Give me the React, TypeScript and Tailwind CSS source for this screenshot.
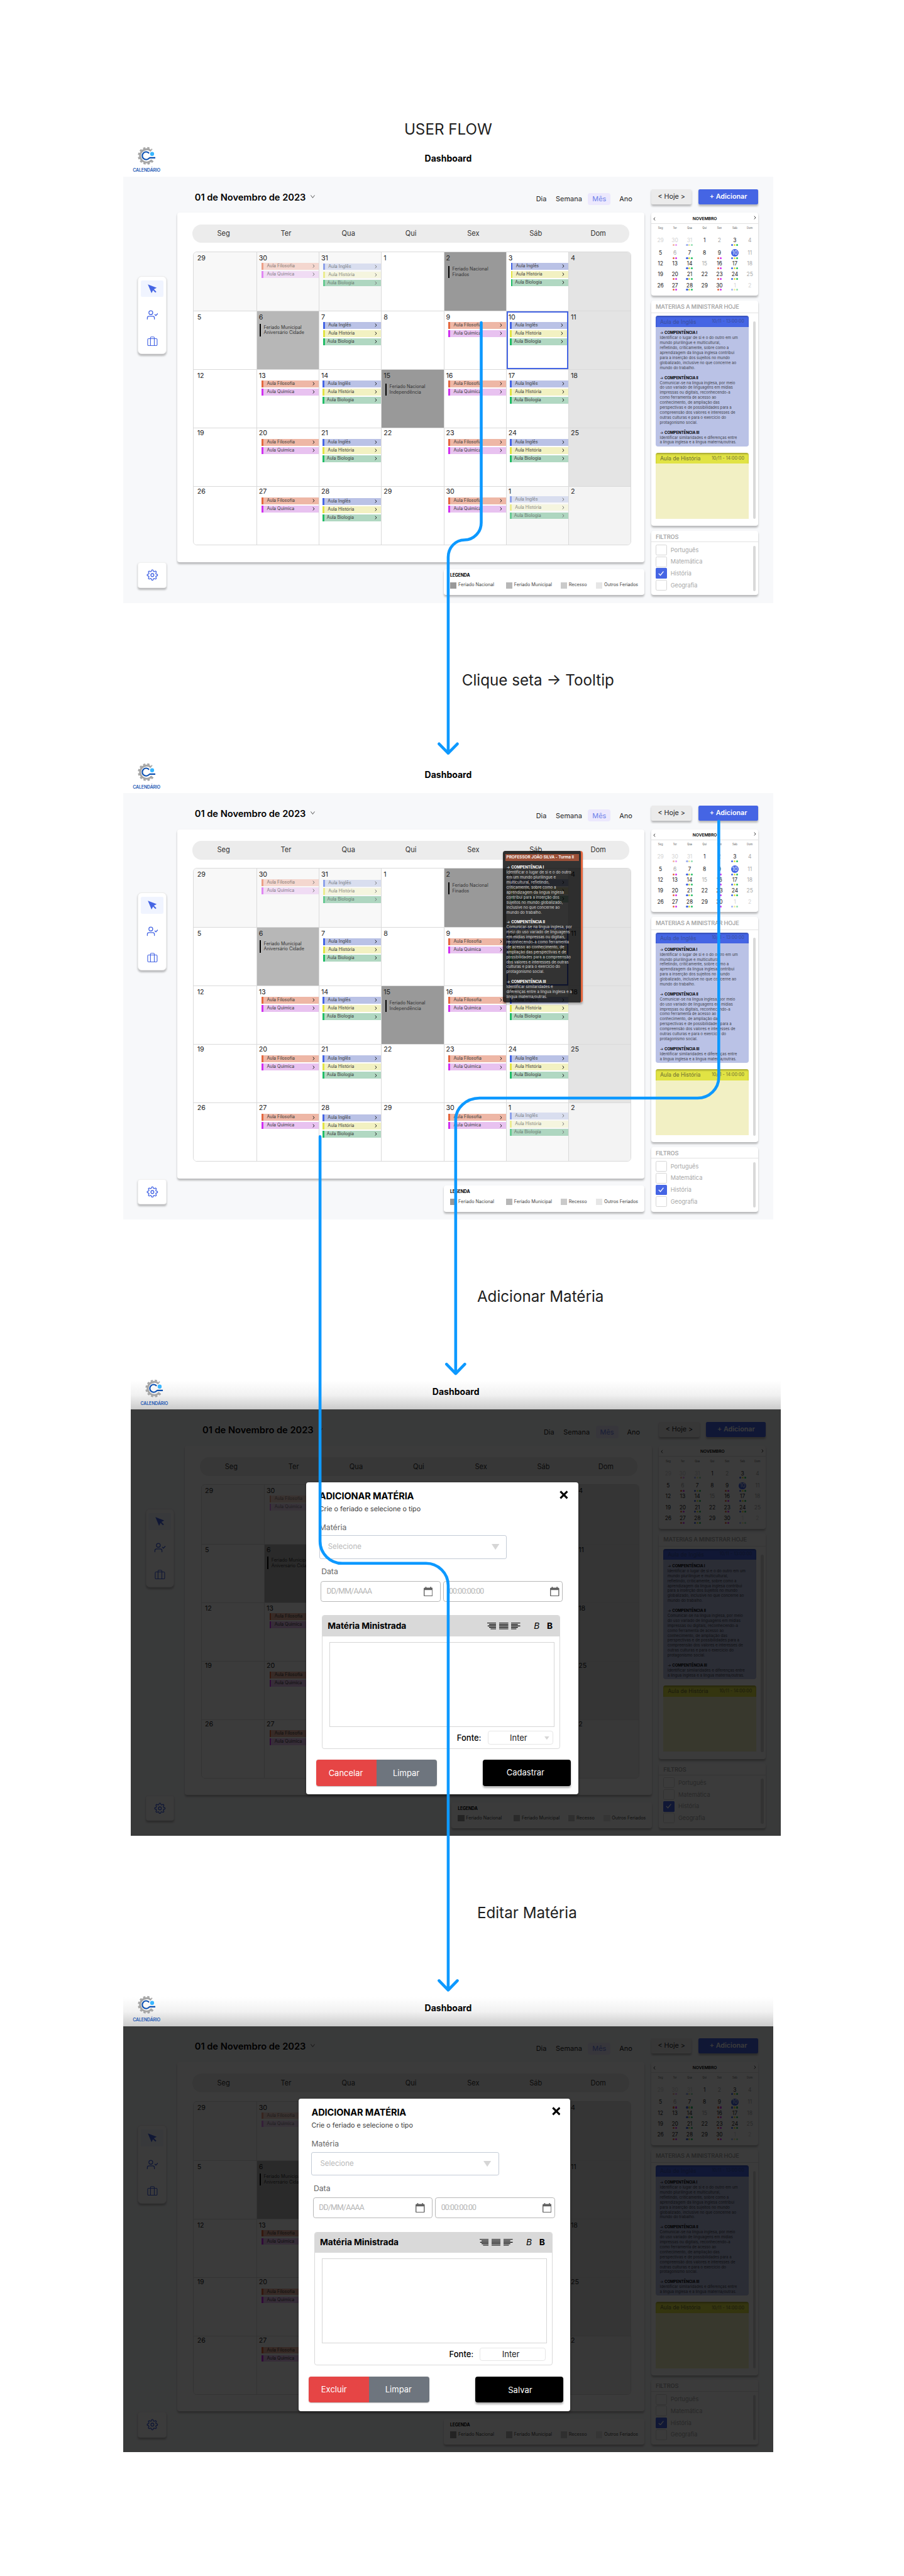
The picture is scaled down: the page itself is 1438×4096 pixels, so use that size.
import type { ReactNode } from "react";

type Kind = "fil" | "qui" | "ing" | "his" | "bio";

const KIND: Record<Kind, { label: string; bar: string; bg: string; soft: string; pad: string }> = {
  fil: { label: "Aula Filosofia", bar: "bg-[#e4673f]", bg: "bg-[#eeb7a6]", soft: "bg-[#f4d7cf]", pad: "pl-[7px]" },
  qui: { label: "Aula Quimica", bar: "bg-[#d02ff0]", bg: "bg-[#e8c2f0]", soft: "bg-[#f0dcf4]", pad: "pl-[7px]" },
  ing: { label: "Aula Inglês", bar: "bg-[#4565e4]", bg: "bg-[#bac2e6]", soft: "bg-[#d9deef]", pad: "pl-[7px]" },
  his: { label: "Aula História", bar: "bg-[#e1e344]", bg: "bg-[#f2f1c2]", soft: "bg-[#f5f5df]", pad: "pl-[7px]" },
  bio: { label: "Aula Biologia", bar: "bg-[#21bd66]", bg: "bg-[#b1d8c2]", soft: "bg-[#aed6c0]", pad: "pl-[5px]" },
};

function Chevron({ className = "" }: { className?: string }) {
  return (
    <svg viewBox="0 0 5 8" className={`h-[8px] w-[5px] shrink-0 ${className}`} fill="none" stroke="currentColor" strokeWidth="1.3">
      <path d="M1 0.8L3.8 4L1 7.2" />
    </svg>
  );
}

function Event({ kind, soft }: { kind: Kind; soft?: boolean }) {
  const k = KIND[kind];
  return (
    <div className={`flex h-[14px] items-stretch ${soft ? k.soft : k.bg}`}>
      <span className={`w-[3.5px] shrink-0 ${k.bar} ${soft ? "opacity-50" : ""}`} />
      <span className={`flex-1 whitespace-nowrap ${k.pad} text-[9.2px] leading-[14px] text-[#3a3a3a] ${soft ? "opacity-60" : ""}`}>{k.label}</span>
      <Chevron className={`mt-[3px] mr-[8px] ${soft ? "text-[#777]" : "text-[#222]"}`} />
    </div>
  );
}

type Cell = {
  n: number;
  bg?: string;
  ev?: "fq" | "ihb";
  soft?: boolean;
  evPos?: string;
  holiday?: [string, string];
  selected?: boolean;
};

const FQ2 = "pt-[22px] pl-[10px]";
const IHB = "pt-[22px] pl-[7px]";
const SUN = "bg-[#e4e4e4]";

const WEEKS: Cell[][] = [
  [
    { n: 29, bg: "bg-[#f8f8f8]" },
    { n: 30, bg: "bg-[#f8f8f8]", ev: "fq", soft: true, evPos: FQ2 },
    { n: 31, bg: "bg-[#f8f8f8]", ev: "ihb", soft: true, evPos: "pt-[23px] pl-[8px]" },
    { n: 1 },
    { n: 2, bg: "bg-[#999]", holiday: ["Feriado Nacional", "Finados"] },
    { n: 3, ev: "ihb", evPos: "pt-[22px] pl-[9px]" },
    { n: 4, bg: SUN },
  ],
  [
    { n: 5 },
    { n: 6, bg: "bg-[#b7b7b7]", holiday: ["Feriado Municipal", "Aniversário Cidade"] },
    { n: 7, ev: "ihb", evPos: "pt-[22px] pl-[8px]" },
    { n: 8 },
    { n: 9, ev: "fq", evPos: "pt-[22px] pl-[9px]" },
    { n: 10, ev: "ihb", evPos: "pt-[22px] pl-[7px] pr-[3px]", selected: true },
    { n: 11, bg: SUN },
  ],
  [
    { n: 12 },
    { n: 13, ev: "fq", evPos: FQ2 },
    { n: 14, ev: "ihb", evPos: IHB },
    { n: 15, bg: "bg-[#999]", holiday: ["Feriado Nacional", "Independência"] },
    { n: 16, ev: "fq", evPos: "pt-[22px] pl-[9px]" },
    { n: 17, ev: "ihb", evPos: IHB },
    { n: 18, bg: SUN },
  ],
  [
    { n: 19 },
    { n: 20, ev: "fq", evPos: FQ2 },
    { n: 21, ev: "ihb", evPos: IHB },
    { n: 22 },
    { n: 23, ev: "fq", evPos: "pt-[22px] pl-[9px]" },
    { n: 24, ev: "ihb", evPos: IHB },
    { n: 25, bg: SUN },
  ],
  [
    { n: 26 },
    { n: 27, ev: "fq", evPos: FQ2 },
    { n: 28, ev: "ihb", evPos: "pt-[23px] pl-[7px]" },
    { n: 29 },
    { n: 30, ev: "fq", evPos: "pt-[22px] pl-[9px]" },
    { n: 1, bg: "bg-[#f8f8f8]", ev: "ihb", soft: true, evPos: "pt-[19px] pl-[7px]" },
    { n: 2, bg: "bg-[#f3f3f3]" },
  ],
];

function DayCell({ cell, row, col }: { cell: Cell; row: number; col: number }) {
  const kinds: Kind[] = cell.ev === "fq" ? ["fil", "qui"] : cell.ev === "ihb" ? ["ing", "his", "bio"] : [];
  return (
    <div className={`relative overflow-hidden ${col ? "border-l" : ""} ${row ? "border-t" : ""} border-[#dadada] ${cell.bg ?? "bg-white"}`}>
      <div
        className={`absolute text-[14px] leading-[16px] tracking-[-0.2px] text-[#222] ${row > 2 ? "top-[2px]" : "top-[5px]"} ${col ? "left-[4px]" : "left-[7px]"}`}
      >
        {cell.n}
      </div>
      {kinds.length > 0 && (
        <div className={`flex flex-col gap-[3px] ${cell.evPos}`}>
          {kinds.map((k) => (
            <Event key={k} kind={k} soft={cell.soft} />
          ))}
        </div>
      )}
      {cell.holiday && (
        <div
          className={`flex gap-[6px] ${cell.n === 2 ? "pt-[28px] pl-[8px]" : cell.n === 6 ? "pt-[26px] pl-[5px]" : "pt-[28px] pl-[7px]"}`}
        >
          <span className="h-[25.5px] w-[3px] bg-black" />
          <p className="pt-[2px] text-[9.4px] leading-[11.2px] whitespace-nowrap text-[#333]">
            {cell.holiday[0]}
            <br />
            {cell.holiday[1]}
          </p>
        </div>
      )}
      {cell.selected && <div className="absolute inset-0 border-[3px] border-[#4565e4]" />}
    </div>
  );
}

const SHADOW = "shadow-[0_3px_4px_rgba(0,0,0,0.25)]";

function arcPath(cx: number, cy: number, r: number, from: number, to: number) {
  const p = (a: number) => `${cx + r * Math.cos((a * Math.PI) / 180)} ${cy + r * Math.sin((a * Math.PI) / 180)}`;
  return `M${p(from)}A${r} ${r} 0 1 1 ${p(to)}`;
}

function Logo() {
  return (
    <div className="flex w-[58px] flex-col items-center">
      <svg viewBox="48 24 114 116" className="h-[38.6px] w-[38px]" fill="none">
        <path d={arcPath(104, 82, 41, 38, 312)} stroke="#a6a6a6" strokeWidth="12" />
        <path d={arcPath(104, 82, 50, 38, 312)} stroke="#a6a6a6" strokeWidth="10" strokeDasharray="14 11.6" />
        <path d="M119 66A24 24 0 1 0 119 97L124 94H158" stroke="#0b4fb0" strokeWidth="8.5" strokeLinejoin="round" />
        <circle cx="138" cy="70" r="12.5" fill="#38b6ff" />
      </svg>
      <span className="mt-[6.5px] text-[9px] leading-[10px] font-semibold tracking-[-0.1px] text-[#1b57b4]">CALENDÁRIO</span>
    </div>
  );
}

const GEAR = Array.from({ length: 96 }, (_, i) => {
  const a = (i / 96) * Math.PI * 2;
  const r = 9.1 + 1.5 * Math.tanh(1.8 * Math.cos(8 * a));
  return `${i ? "L" : "M"}${(12 + r * Math.cos(a)).toFixed(2)} ${(12 + r * Math.sin(a)).toFixed(2)}`;
}).join("") + "Z";

function Sidebar() {
  return (
    <aside className="w-[112.5px] pt-[206px] pl-[30.5px]">
      <div className={`flex h-[162.5px] w-[59.5px] flex-col items-center rounded-[8px] border border-[#ececec] bg-white pt-[7.5px] text-[#4565e4] ${SHADOW}`}>
        <div className="flex h-[35px] w-[47px] items-center justify-center rounded-[3px] bg-[#f0f4ff]">
          <svg viewBox="0 0 19 19" className="h-[19px] w-[19px]" fill="currentColor">
            <path d="M0.3 0.3L18.6 7.4L12.8 10.4L18 15.6L15.8 17.4L11 12.4L7.9 18.5Z" />
          </svg>
        </div>
        <svg viewBox="0 0 24 20" className="mt-[27px] h-[20px] w-[24px]" fill="none" stroke="currentColor" strokeWidth="1.7" strokeLinecap="round" strokeLinejoin="round">
          <circle cx="9" cy="5.5" r="4" />
          <path d="M1.8 19V16.5A3.5 3.5 0 0 1 5.3 13H13a3.5 3.5 0 0 1 3.5 3.5V19M17.5 9.5l2 2L23.2 7.5" />
        </svg>
        <svg viewBox="0 0 22 20" className="mt-[35px] h-[20px] w-[22px]" fill="none" stroke="currentColor" strokeWidth="1.5" strokeLinejoin="round">
          <rect x="1.2" y="4.6" width="19.6" height="14.4" rx="2" />
          <path d="M7 19V2.8A1.8 1.8 0 0 1 8.8 1h4.4A1.8 1.8 0 0 1 15 2.8V19" />
        </svg>
      </div>
      <div className={`mt-[432.5px] flex h-[53px] w-[59.5px] items-center justify-center rounded-[5px] border border-[#f0f0f0] bg-white text-[#4565e4] ${SHADOW}`}>
        <svg viewBox="0 0 24 24" className="h-[24.5px] w-[24.5px]" fill="none" stroke="currentColor" strokeWidth="1.7" strokeLinejoin="round">
          <path d={GEAR} />
          <circle cx="12" cy="12" r="3" />
        </svg>
      </div>
    </aside>
  );
}

const DAYS = ["Seg", "Ter", "Qua", "Qui", "Sex", "Sáb", "Dom"];

function MainArea() {
  return (
    <main className="w-[969.5px]">
      <div className="flex h-[75px] items-start pl-[36px] text-black">
        <h2 className="mt-[32px] w-[241px] text-[19.2px] leading-[22px] font-semibold tracking-[-0.05px] whitespace-nowrap">01 de Novembro de 2023</h2>
        <svg viewBox="0 0 9 7" className="mt-[37.5px] h-[7px] w-[9px]" fill="none" stroke="#444" strokeWidth="1.2">
          <path d="M0.6 0.6L4.5 6L8.4 0.6" />
        </svg>
        <div className="mt-[34px] ml-[459px] flex h-[25px] items-center text-[14.3px] whitespace-nowrap text-[#222]">
          <span className="w-[41px]">Dia</span>
          <span className="w-[67px]">Semana</span>
          <span className="flex h-[25px] w-[47px] items-center justify-center rounded-[5px] bg-[#ece8fd] text-[#6c80ea]">Mês</span>
          <span className="ml-[18px]">Ano</span>
        </div>
      </div>
      <section className={`h-[725px] rounded-[5px] bg-white pt-[24px] pl-[31px] ${SHADOW}`}>
        <div className="grid h-[38.5px] w-[908px] grid-cols-7 items-center rounded-[19px] bg-[#ececec] text-center text-[14.5px] text-[#333]">
          {DAYS.map((d) => (
            <span key={d}>{d}</span>
          ))}
        </div>
        <div className="mt-[18px] ml-[2px] grid h-[610px] w-[910px] grid-cols-7 grid-rows-5 overflow-hidden rounded-[8px] border border-[#dadada]">
          {WEEKS.flatMap((w, r) => w.map((c, i) => <DayCell key={`${r}-${i}`} cell={c} row={r} col={i} />))}
        </div>
      </section>
      <section className={`mt-[15px] ml-[553px] h-[54px] w-[416.5px] rounded-[5px] bg-white pt-[8px] pl-[13.5px] ${SHADOW}`}>
        <h3 className="text-[9px] leading-[11px] font-bold tracking-[-0.2px] text-black">LEGENDA</h3>
        <div className="mt-[7.5px] flex h-[14px] items-center text-[9.4px] whitespace-nowrap text-[#444]">
          <Legend color="bg-[#999]" text="Feriado Nacional" width="w-[116px]" />
          <Legend color="bg-[#b7b7b7]" text="Feriado Municipal" width="w-[113.5px]" />
          <Legend color="bg-[#cacaca]" text="Recesso" width="w-[73.5px]" />
          <Legend color="bg-[#e6e6e6]" text="Outros Feriados" width="w-[95px]" />
        </div>
      </section>
    </main>
  );
}

function Legend({ color, text, width }: { color: string; text: string; width: string }) {
  return (
    <div className={`flex shrink-0 items-center gap-[3.5px] ${width}`}>
      <span className={`h-[13.5px] w-[13.5px] ${color}`} />
      {text}
    </div>
  );
}

type Mini = { n: number; tone?: "soft" | "mute" | "today"; dots?: "fq" | "ihb"; softDots?: boolean };

const MINI: Mini[][] = [
  [{ n: 29, tone: "soft" }, { n: 30, tone: "soft", dots: "fq", softDots: true }, { n: 31, tone: "soft", dots: "ihb", softDots: true }, { n: 1 }, { n: 2, tone: "mute" }, { n: 3, dots: "ihb" }, { n: 4, tone: "mute" }],
  [{ n: 5 }, { n: 6, tone: "mute", dots: "fq" }, { n: 7, dots: "ihb" }, { n: 8 }, { n: 9, dots: "fq" }, { n: 10, tone: "today", dots: "ihb" }, { n: 11, tone: "mute" }],
  [{ n: 12 }, { n: 13 }, { n: 14, dots: "ihb" }, { n: 15, tone: "mute" }, { n: 16, dots: "fq" }, { n: 17, dots: "ihb" }, { n: 18, tone: "mute" }],
  [{ n: 19 }, { n: 20, dots: "fq" }, { n: 21, dots: "ihb" }, { n: 22 }, { n: 23, dots: "fq" }, { n: 24, dots: "ihb" }, { n: 25, tone: "mute" }],
  [{ n: 26 }, { n: 27, dots: "fq" }, { n: 28, dots: "ihb" }, { n: 29 }, { n: 30, dots: "fq" }, { n: 1, tone: "soft", dots: "ihb", softDots: true }, { n: 2, tone: "soft" }],
];
const MINI_GRID = "grid grid-cols-[31px_29px_32px_30px_32px_32px_30px] pl-[3.5px] text-center";
const ROW_H = ["h-[25.5px]", "h-[22.5px]", "h-[22.5px]", "h-[23px]", "h-[22px]"];

function MiniCalendar() {
  return (
    <section className={`mt-[18px] h-[172px] w-[222px] rounded-[5px] bg-white ${SHADOW}`}>
      <div className="flex h-[22.5px] items-center justify-between border-b-[1.5px] border-[#e2e2e2] px-[4px] pt-[3px] text-[8.8px] font-semibold tracking-[-0.1px] text-black">
        <Chevron className="rotate-180 text-[#333]" />
        <span>NOVEMBRO</span>
        <Chevron className="mb-[4px] text-[#333]" />
      </div>
      <div className={`${MINI_GRID} mt-[5px] h-[10px] items-center text-[5.5px] text-[#555]`}>
        {DAYS.map((d) => (
          <span key={d}>{d}</span>
        ))}
      </div>
      <div className="mt-[12.5px]">
        {MINI.map((row, r) => (
          <div key={r} className={`${MINI_GRID} ${ROW_H[r]}`}>
            {row.map((m, i) => (
              <div key={i} className="flex flex-col items-center">
                <span
                  className={`flex h-[15px] w-[15px] items-center justify-center rounded-full text-[11px] leading-none ${
                    m.tone === "soft" ? "text-[#d4d4d4]" : m.tone === "mute" ? "text-[#a8a8a8]" : m.tone === "today" ? "bg-[#4565e4] text-[#e4e8fb]" : "text-[#222]"
                  }`}
                >
                  {m.n}
                </span>
                {m.dots && (
                  <span className={`${r === 1 ? "mt-[1.5px]" : "-mt-[0.5px]"} flex gap-[1.2px] ${m.softDots ? "opacity-50" : ""}`}>
                    {(m.dots === "fq" ? (["fil", "qui"] as Kind[]) : (["ing", "his", "bio"] as Kind[])).map((k) => (
                      <i key={k} className={`h-[4px] w-[4px] rounded-full ${KIND[k].bar}`} />
                    ))}
                  </span>
                )}
              </div>
            ))}
          </div>
        ))}
      </div>
    </section>
  );
}

const PANEL_TEXT: [string, string[]][] = [
  ["COMPENTÊNCIA I", ["Identificar o lugar de si e o do outro em um", "mundo plurilíngue e multicultural,", "refletindo, críticamente, sobre como a", "aprendizagem da língua inglesa contribui", "para a inserção dos sujeitos no mundo", "globalizado, inclusive no que concerne ao", "mundo do trabalho."]],
  ["COMPENTÊNCIA II", ["Comunicar-se na língua inglesa, por meio", "do uso variado de linguagens em mídias", "impressas ou digitais, reconhecendo-a", "como ferramenta de acesso ao", "conhecimento, de ampliação das", "perspectivas e de possibilidades para a", "compreensão dos valores e interesses de", "outras culturas e para o exercício do", "protagonismo social."]],
  ["COMPENTÊNCIA III", ["Identificar similaridades e diferenças entre", "a língua inglesa e a língua materna/outras."]],
];

const TOOLTIP_TEXT: [string, string[]][] = [
  ["COMPENTÊNCIA I", ["Identificar o lugar de si e o do outro", "em um mundo plurilíngue e", "multicultural, refletindo,", "críticamente, sobre como a", "aprendizagem da língua inglesa", "contribui para a inserção dos", "sujeitos no mundo globalizado,", "inclusive no que concerne ao", "mundo do trabalho."]],
  ["COMPENTÊNCIA II", ["Comunicar-se na língua inglesa, por", "meio do uso variado de linguagens", "em mídias impressas ou digitais,", "reconhecendo-a como ferramenta", "de acesso ao conhecimento, de", "ampliação das perspectivas e de", "possibilidades para a compreensão", "dos valores e interesses de outras", "culturas e para o exercício do", "protagonismo social."]],
  ["COMPENTÊNCIA III", ["Identificar similaridades e", "diferenças entre a língua inglesa e a", "língua materna/outras."]],
];

function Competences({ data, strong, body }: { data: [string, string[]][]; strong: string; body: string }) {
  return (
    <div className="flex flex-col gap-[10.33px] text-[8px] leading-[10.33px] whitespace-nowrap">
      {data.map(([head, lines]) => (
        <div key={head}>
          <div className={strong}>
            <span className="font-normal">→ </span>
            <span className="font-bold tracking-[-0.15px]">{head}</span>
          </div>
          {lines.map((l) => (
            <div key={l} className={body}>
              {l}
            </div>
          ))}
        </div>
      ))}
    </div>
  );
}

function SubjectsPanel() {
  return (
    <section className={`mt-[10px] h-[468px] w-[222px] rounded-[5px] bg-white ${SHADOW}`}>
      <h3 className="h-[27px] border-b-[1.5px] border-[#e2e2e2] pl-[9px] text-[12px] leading-[27px] font-semibold tracking-[-0.2px] text-[#a8a8a8]">MATERIAS A MINISTRAR HOJE</h3>
      <div className="flex pt-[5px] pl-[9px]">
        <div className="w-[193px]">
          <article className="h-[271px] overflow-hidden rounded-[5px] bg-[#bac2e6]">
            <div className="flex h-[23px] items-center justify-between bg-[#4565e4] px-[9px] text-[#3c4f9c] shadow-[inset_0_2px_3px_rgba(0,0,0,0.25)]">
              <span className="pt-[3px] text-[11.3px]">Aula de Inglês</span>
              <span className="text-[9.2px]">10/11 - 13:00:00</span>
            </div>
            <div className="pt-[7.3px] pl-[8.5px]">
              <Competences data={PANEL_TEXT} strong="text-black" body="text-[#3c3e4a]" />
            </div>
          </article>
          <article className="mt-[13px] h-[137.5px] overflow-hidden rounded-t-[5px] bg-[#f2f0c4]">
            <div className="flex h-[23px] items-center justify-between bg-[#e1e344] px-[9px] text-[#6f7032] shadow-[inset_0_3px_3px_rgba(0,0,0,0.25)]">
              <span className="pt-[2px] text-[11.3px]">Aula de História</span>
              <span className="pt-[2px] text-[9.2px]">10/11 - 14:00:00</span>
            </div>
          </article>
        </div>
        <div className="mt-[11.5px] ml-[9.5px] h-[410.5px] w-[5.5px] rounded-full bg-[#d9d9d9]" />
      </div>
    </section>
  );
}

function Filters() {
  return (
    <section className={`mt-[10px] h-[134px] w-[222px] rounded-[5px] bg-white ${SHADOW}`}>
      <h3 className="h-[24px] border-b-[1.5px] border-[#e2e2e2] pl-[9px] text-[12px] leading-[25px] font-semibold tracking-[-0.2px] text-[#a8a8a8]">FILTROS</h3>
      <div className="flex pt-[5px] pl-[9px]">
        <ul className="flex w-[202.5px] flex-col gap-[2.4px]">
          {["Português", "Matemática", "História", "Geografia"].map((f) => (
            <li key={f} className="flex h-[22px] items-center gap-[8px] text-[12px] text-[#a8a8a8]">
              {f === "História" ? (
                <span className="flex h-[22px] w-[23px] items-center justify-center rounded-[2px] bg-[#4565e4]">
                  <svg viewBox="0 0 12 10" className="h-[10px] w-[12px]" fill="none" stroke="white" strokeWidth="1.7">
                    <path d="M1 5L4.5 8.8L11 0.8" />
                  </svg>
                </span>
              ) : (
                <span className="h-[22px] w-[23px] rounded-[3px] border border-[#d6d6d6] bg-white" />
              )}
              {f}
            </li>
          ))}
        </ul>
        <div className="mt-[2px] h-[94px] w-[5.5px] rounded-full bg-[#d9d9d9]" />
      </div>
    </section>
  );
}

function RightColumn() {
  return (
    <aside className="ml-[15px] w-[222px] pt-[25.5px]">
      <div className="flex h-[31.5px] justify-between text-[14px]">
        <button className={`w-[84px] rounded-[3px] bg-[#ebebeb] text-[#222] ${SHADOW}`}>&lt; Hoje &gt;</button>
        <button className={`w-[124px] rounded-[3px] bg-[#4565e4] font-semibold text-white ${SHADOW}`}>+ Adicionar</button>
      </div>
      <MiniCalendar />
      <SubjectsPanel />
      <Filters />
    </aside>
  );
}

function Dashboard({ dark, className, children }: { dark?: boolean; className: string; children?: ReactNode }) {
  return (
    <section className={`relative h-[960px] w-[1350px] overflow-hidden ${className}`}>
      <header className={`relative flex h-[75px] justify-center ${dark ? "bg-linear-to-b from-white from-20% via-[#f1f1f1] via-60% to-[#cbcbcb]" : "bg-white"}`}>
        <div className="absolute top-[12px] left-[19.5px]">
          <Logo />
        </div>
        <h1 className="pt-[27px] text-[18.3px] leading-[21px] font-bold text-black">Dashboard</h1>
      </header>
      <div className="relative flex h-[885px] bg-[#f7f8fa]">
        <Sidebar />
        <MainArea />
        <RightColumn />
        {dark && <div className="absolute inset-0 bg-black/77" />}
      </div>
      {children}
    </section>
  );
}

function Tooltip() {
  return (
    <div className="absolute top-[195px] left-[788.5px] h-[315px] w-[166px] overflow-hidden rounded-[5px] border-r-[5px] border-[#e4673f] bg-black/80 bg-clip-padding pt-[6px] pl-[5.5px] shadow-[0_3px_4px_rgba(0,0,0,0.25)]">
      <div className="h-[15px] w-[153px] bg-[#e4673f]/60 pl-[2px] text-[8.4px] leading-[15px] font-semibold tracking-[-0.05px] whitespace-nowrap text-white">PROFESSOR JOÃO SILVA - Turma II</div>
      <div className="pt-[8px] pl-[2px]">
        <Competences data={TOOLTIP_TEXT} strong="text-white" body="text-[#d6d6d6]" />
      </div>
    </div>
  );
}

function CalendarIcon() {
  return (
    <svg viewBox="0 0 19 20" className="h-[20px] w-[19px]" fill="#606060">
      <path fillRule="evenodd" d="M2 2H3.5V0H5.5V2H13.5V0H15.5V2H17A2 2 0 0 1 19 4V18A2 2 0 0 1 17 20H2A2 2 0 0 1 0 18V4A2 2 0 0 1 2 2ZM1.8 7V18.2H17.2V7Z" />
    </svg>
  );
}

function AlignIcon({ lines }: { lines: [number, number][] }) {
  return (
    <svg viewBox="0 0 19 14" className="h-[14px] w-[19px]" stroke="black" strokeWidth="1.5">
      {lines.map(([a, b], i) => (
        <path key={i} d={`M${a} ${1 + i * 3}H${b}`} />
      ))}
    </svg>
  );
}

function Field({ text, pad }: { text: string; pad: string }) {
  return (
    <div className={`flex h-[43px] w-[249px] items-center justify-between rounded-[5px] border-[1.3px] border-[#b8b8b8] pl-[11px] ${pad} font-['Roboto',sans-serif] text-[16px] tracking-[-1px] text-[#b5b5b5]`}>
      <span>{text}</span>
      <CalendarIcon />
    </div>
  );
}

function Modal({ cancel, submit, fontArrow }: { cancel: string; submit: string; fontArrow?: boolean }) {
  return (
    <div className="absolute top-[226px] left-[364px] h-[648px] w-[565px] rounded-[5px] bg-white pt-[18px] shadow-[0_2px_5px_rgba(0,0,0,0.4)]">
      <div className="flex items-start justify-between pr-[21px] pl-[27px]">
        <h2 className="text-[19px] leading-[22px] font-bold tracking-[-0.15px] text-black">ADICIONAR MATÉRIA</h2>
        <svg viewBox="0 0 18 18" className="-mt-[1px] h-[18px] w-[18px]" stroke="black" strokeWidth="4">
          <path d="M1.8 1.8L16.2 16.2M16.2 1.8L1.8 16.2" />
        </svg>
      </div>
      <p className="mt-[8px] pl-[27px] text-[14px] leading-[16px] text-[#3a3a3a]">Crie o feriado e selecione o tipo</p>
      <div className="mt-[19px] pl-[27px] text-[16px] leading-[20px] text-[#666]">Matéria</div>
      <div className="mt-[7px] ml-[27px] flex h-[49px] w-[390px] items-center justify-between rounded-[4px] border-[1.5px] border-[#c3cbd6] pr-[15px] pl-[17px] text-[15px] text-[#b8b8b8]">
        <span>Selecione</span>
        <svg viewBox="0 0 16 12" className="h-[12px] w-[16px]" fill="#d6d6d6">
          <path d="M0 0H16L8 12Z" />
        </svg>
      </div>
      <div className="mt-[16.5px] pl-[31.5px] text-[16px] leading-[20px] text-[#666]">Data</div>
      <div className="mt-[9.5px] flex gap-[5px] pl-[30px]">
        <Field text="DD/MM/AAAA" pad="pr-[15px]" />
        <Field text="00:00:00:00" pad="pr-[6px]" />
      </div>
      <div className="mt-[28px] ml-[32.5px] h-[277.5px] w-[495.5px] overflow-hidden rounded-[5px] border border-[#d9d9d9]">
        <div className="flex h-[42px] items-center bg-[#d9d9d9] pl-[11px]">
          <span className="w-[331px] text-[18px] font-bold tracking-[-0.1px] text-black">Matéria Ministrada</span>
          <div className="flex gap-[6.2px]">
            <AlignIcon lines={[[0, 19], [4, 19], [1, 19], [4, 19], [7, 19]]} />
            <AlignIcon lines={[[0, 19], [0, 19], [0, 19], [0, 19], [0, 19]]} />
            <AlignIcon lines={[[0, 19], [0, 14], [0, 19], [0, 14], [0, 11]]} />
          </div>
          <span className="ml-[28px] w-[27px] text-[18px] text-black italic">B</span>
          <span className="text-[18px] font-bold text-black">B</span>
        </div>
        <div className="mt-[12px] ml-[15px] h-[177px] w-[467px] border border-[#d6d6d6]" />
        <div className="mt-[8px] mr-[13px] flex h-[28.5px] items-center justify-end">
          <span className="mr-[13px] pt-[2px] text-[17px] font-medium text-black">Fonte:</span>
          <div className="flex h-[28.5px] w-[137px] items-center rounded-[5px] border-[1.5px] border-[#e6e6e6] pr-[7px] pl-[45px] text-[17px] text-[#222]">
            <span className="flex-1">Inter</span>
            {fontArrow && (
              <svg viewBox="0 0 10 7" className="mt-[1px] h-[7px] w-[10px]" fill="#d6d6d6">
                <path d="M0 0H10L5 7Z" />
              </svg>
            )}
          </div>
        </div>
      </div>
      <div className="mt-[23px] flex h-[54.5px] justify-between pr-[15.5px] pl-[21px] text-[17px] text-white">
        <div className="flex overflow-hidden rounded-[5px] shadow-[0_1px_2px_rgba(0,0,0,0.25)]">
          <button className={`w-[125.5px] bg-[#e64545] text-left ${cancel === "Excluir" ? "pl-[26px]" : "pl-[25.5px]"}`}>{cancel}</button>
          <button className="w-[125.5px] bg-[#6e757e] pr-[3px]">Limpar</button>
        </div>
        <button className={`w-[182px] rounded-[5px] bg-black ${submit === "Salvar" ? "pt-[2px] pl-[4px]" : "pr-[6px] pb-[2px]"} shadow-[0_3px_4px_rgba(0,0,0,0.3)]`}>{submit}</button>
      </div>
    </div>
  );
}

function Connectors() {
  return (
    <svg viewBox="0 0 1878 5348" className="pointer-events-none absolute inset-0 h-[5348px] w-[1878px]" fill="none" stroke="#0d99ff" strokeWidth="6" strokeLinecap="round" strokeLinejoin="round">
      <path d="M999.6 670V1085C999.6 1105 984 1121 965 1121C946 1121 931 1137 931 1157V1564M912 1544.5L931 1564L950 1544.5" />
      <path d="M1493 1705V2237A44 43 0 0 1 1449 2280H996A50 45 0 0 0 946.5 2325V2852M927.5 2832.5L946.5 2852L965.5 2832.5" />
      <path d="M664.8 2360V3200A46 46 0 0 0 711 3246H885A46 46 0 0 1 931 3292V4132M912 4112.5L931 4132L950 4112.5" />
    </svg>
  );
}

export default function App() {
  return (
    <div className="h-[4096px] w-[1438px] overflow-hidden bg-white">
      <div className="relative h-[5348px] w-[1878px] bg-white font-['Inter',sans-serif] [zoom:0.7658]">
        <div className="flex flex-col pt-[292px] pl-[256px]">
          <Dashboard className="mb-[320px]" />
          <Dashboard className="mb-[320px]">
            <Tooltip />
          </Dashboard>
          <Dashboard dark className="mb-[320px] ml-[16px]">
            <Modal cancel="Cancelar" submit="Cadastrar" fontArrow />
          </Dashboard>
          <Dashboard dark className="">
            <Modal cancel="Excluir" submit="Salvar" />
          </Dashboard>
        </div>
        <Connectors />
        <div className="absolute top-[249px] left-[839.5px] text-[31.6px] leading-[40px] whitespace-nowrap text-[#1e1e1e]">USER FLOW</div>
        <div className="absolute top-[1393px] left-[959.5px] text-[31.6px] leading-[40px] whitespace-nowrap text-[#1e1e1e]">Clique seta → Tooltip</div>
        <div className="absolute top-[2673px] left-[991px] text-[31.6px] leading-[40px] whitespace-nowrap text-[#1e1e1e]">Adicionar Matéria</div>
        <div className="absolute top-[3953px] left-[991px] text-[31.6px] leading-[40px] whitespace-nowrap text-[#1e1e1e]">Editar Matéria</div>
      </div>
    </div>
  );
}
